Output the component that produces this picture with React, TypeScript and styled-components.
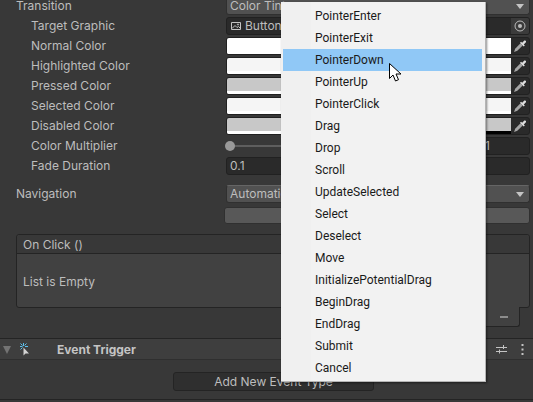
import React from "react";
import styled, { createGlobalStyle } from "styled-components";

const GlobalStyle = createGlobalStyle`
  html, body {
    margin: 0;
    padding: 0;
    height: 402px;
    overflow: hidden;
    background: #383838;
  }
  * { box-sizing: border-box; }
`;

const Page = styled.div`
  position: relative;
  width: 533px;
  height: 402px;
  overflow: hidden;
  background: #383838;
  color: #bdbdbd;
  font: 12px/20px Inter, "Noto Sans", sans-serif;
`;

const Inspector = styled.div`
  margin-top: -4px;
  padding: 0 3px 0 16px;
`;

const Row = styled.div<{ $indent?: boolean }>`
  display: grid;
  grid-template-columns: ${(p) => (p.$indent ? "195px" : "210px")} 1fr;
  height: 20px;
  align-items: center;
  padding-left: ${(p) => (p.$indent ? "15px" : "0")};
`;

const Label = styled.span`
  white-space: nowrap;
`;

const Dropdown = styled.div`
  display: flex;
  align-items: center;
  justify-content: space-between;
  height: 18px;
  padding: 0 5px 0 3px;
  background: #515151;
  border: 1px solid #303030;
  border-top-color: #656565;
  border-radius: 3px;
  white-space: nowrap;
  overflow: hidden;
`;

const Arrow = styled.span`
  width: 0;
  height: 0;
  border-left: 4px solid transparent;
  border-right: 4px solid transparent;
  border-top: 5px solid #c4c4c4;
`;

const Field = styled.div`
  display: flex;
  align-items: center;
  height: 18px;
  padding: 0 3px;
  background: #2a2a2a;
  border: 1px solid #212121;
  border-radius: 3px;
  white-space: nowrap;
  overflow: hidden;
`;

const ObjectField = styled(Field)`
  justify-content: space-between;
  padding-right: 0;
`;

const ObjectName = styled.span`
  display: flex;
  align-items: center;
  gap: 3px;
`;

const TargetButton = styled.span`
  display: flex;
  align-items: center;
  justify-content: center;
  width: 18px;
  height: 16px;
  background: #3b3b3b;
`;

const ColorField = styled.div`
  display: flex;
  height: 18px;
  border: 1px solid #212121;
  border-radius: 3px;
  background: #2a2a2a;
  overflow: hidden;
`;

const Swatch = styled.div<{ $color: string }>`
  flex: 1;
  display: flex;
  flex-direction: column;
  justify-content: flex-end;
  background: ${(p) => p.$color};
`;

// white/black strip under a swatch shows the colour's alpha
const AlphaBar = styled.div<{ $alpha: number }>`
  height: 3px;
  background: linear-gradient(
    to right,
    #fff ${(p) => p.$alpha}%,
    #000 ${(p) => p.$alpha}%
  );
`;

const Picker = styled.span`
  display: flex;
  align-items: center;
  justify-content: center;
  width: 18px;
`;

const SliderRow = styled.div`
  display: flex;
  align-items: center;
  gap: 5px;
`;

const Track = styled.div`
  position: relative;
  flex: 1;
  height: 2px;
  background: #5e5e5e;
`;

const Knob = styled.span`
  position: absolute;
  left: -1px;
  top: -4px;
  width: 10px;
  height: 10px;
  border-radius: 50%;
  background: #999;
`;

const NumberField = styled(Field)`
  width: 49px;
`;

const Spacer = styled.div<{ $h: number }>`
  height: ${(p) => p.$h}px;
`;

const VisualizeRow = styled.div`
  display: flex;
  justify-content: flex-end;
  margin-top: 3px;
`;

const VisualizeButton = styled.div`
  width: 306px;
  height: 17px;
  background: #585858;
  border: 1px solid #303030;
  border-radius: 3px;
`;

const EventBox = styled.div`
  margin-top: 10px;
  border: 1px solid #242424;
  border-radius: 3px;
  background: #414141;
`;

const EventHeader = styled.div`
  height: 19px;
  padding-left: 6px;
  line-height: 19px;
  background: #383838;
  border-bottom: 1px solid #242424;
  border-radius: 3px 3px 0 0;
`;

const EventBody = styled.div`
  display: flex;
  align-items: center;
  height: 53px;
  padding: 2px 0 0 6px;
`;

const FooterRow = styled.div`
  display: flex;
  justify-content: flex-end;
  padding-right: 10px;
`;

const RemoveTab = styled.div`
  display: flex;
  align-items: center;
  justify-content: flex-end;
  width: 70px;
  height: 20px;
  margin-top: -1px;
  padding-right: 11px;
  background: #414141;
  border: 1px solid #242424;
  border-top: 0;
  border-radius: 0 0 3px 3px;
`;

const Minus = styled.span`
  width: 8px;
  height: 2px;
  background: #8c8c8c;
`;

const ComponentBar = styled.div`
  display: flex;
  align-items: center;
  height: 22px;
  margin-top: 11px;
  padding: 1px 9px 0 3px;
  background: #3e3e3e;
  border-top: 1px solid #242424;
  border-bottom: 1px solid #2f2f2f;
`;

const FoldArrow = styled.span`
  width: 0;
  height: 0;
  margin-right: 8px;
  border-left: 4.5px solid transparent;
  border-right: 4.5px solid transparent;
  border-top: 8px solid #737373;
`;

const ComponentTitle = styled.span`
  margin-left: 27px;
  flex: 1;
  font-weight: 700;
  color: #c4c4c4;
`;

const BarIcons = styled.span`
  display: flex;
  align-items: center;
  gap: 10px;
`;

const AddRow = styled.div`
  display: flex;
  padding: 12px 0 0 173px;
`;

const AddButton = styled.div`
  display: flex;
  align-items: center;
  justify-content: center;
  width: 201px;
  height: 19px;
  background: #2f2f2f;
  border: 1px solid #242424;
  border-radius: 3px;
`;

const BottomLine = styled.div`
  margin-top: 8px;
  height: 1px;
  background: #242424;
`;

const Menu = styled.ul`
  position: absolute;
  left: 281px;
  top: 2px;
  width: 205px;
  height: 380px;
  margin: 0;
  padding: 3px 3px 0 2px;
  list-style: none;
  background: linear-gradient(to right, #f0f0f0 30px, #f2f2f2 30px);
  border-right: 1px solid #b5b5b5;
  border-bottom: 1px solid #b5b5b5;
  box-shadow: 1px 1px 2px rgba(0, 0, 0, 0.45);
  font: 12px/22px Roboto, "Open Sans", sans-serif;
  color: #1a1a1a;
`;

const MenuItem = styled.li<{ $active?: boolean }>`
  height: 22px;
  padding-left: 32px;
  background: ${(p) => (p.$active ? "#90c8f6" : "transparent")};
`;

const Cursor = styled.svg`
  position: absolute;
  left: 389px;
  top: 63px;
`;

const ImageIcon = () => (
  <svg width="12" height="10" viewBox="0 0 12 10" fill="none" stroke="#c4c4c4">
    <path d="M1.5 1.5h9v7h-9z" />
    <path d="M2 7.5l3-3 2 2 1.500-1 2 2" />
    <circle cx="8" cy="3.500" r=".6" />
  </svg>
);

const TargetIcon = () => (
  <svg width="12" height="12" viewBox="0 0 12 12" fill="none" stroke="#bdbdbd">
    <circle cx="6" cy="6" r="5" />
    <circle cx="6" cy="6" r="2" fill="#bdbdbd" stroke="none" />
  </svg>
);

const PipetteIcon = () => (
  <svg width="14" height="14" viewBox="0 0 13 13">
    <path d="M1 12l1-3 5-5 2 2-5 5z" fill="#a5a5a5" />
    <path d="M6.500 3.500l1-1 1 1 2-2a1.100 1.100 0 0 1 1.500 1.500l-2 2 1 1-1 1z" fill="#dcdcdc" />
  </svg>
);

const TriggerIcon = () => (
  <svg width="11" height="13" viewBox="0 0 11 13" fill="none">
    <path d="M4.500 4.500v8l2-2h3.500z" fill="#d2d2d2" />
    <path
      d="M4.500 0v3M1 3.500h2.500M6 3.500h3M1.500 .5l2 2M7.500 .5l-2 2M1.500 6.500l2-2"
      stroke="#5cc0ec"
    />
  </svg>
);

const HelpIcon = () => (
  <svg width="11" height="11" viewBox="0 0 11 11" fill="none" stroke="#9a9a9a">
    <circle cx="5.500" cy="5.500" r="4.500" />
  </svg>
);

const SlidersIcon = () => (
  <svg width="11" height="11" viewBox="0 0 11 11" stroke="#c4c4c4">
    <path d="M0 3.500h11M0 7.500h11M7.500 1v4M3.500 5.500v4" />
  </svg>
);

const KebabIcon = () => (
  <svg width="7" height="11" viewBox="-4 0 7 11" fill="#c4c4c4">
    <path d="M0.500 0h2v2h-2zM0.500 4.500h2v2h-2zM0.500 9h2v2h-2z" />
  </svg>
);

const colors = [
  { label: "Normal Color", value: "#ffffff", alpha: 100 },
  { label: "Highlighted Color", value: "#f5f5f5", alpha: 100 },
  { label: "Pressed Color", value: "#c8c8c8", alpha: 100 },
  { label: "Selected Color", value: "#f5f5f5", alpha: 100 },
  { label: "Disabled Color", value: "#c8c8c8", alpha: 50 },
];

const events = [
  "PointerEnter",
  "PointerExit",
  "PointerDown",
  "PointerUp",
  "PointerClick",
  "Drag",
  "Drop",
  "Scroll",
  "UpdateSelected",
  "Select",
  "Deselect",
  "Move",
  "InitializePotentialDrag",
  "BeginDrag",
  "EndDrag",
  "Submit",
  "Cancel",
];

export default function App() {
  return (
    <Page>
      <GlobalStyle />
      <Inspector>
        <Row>
          <Label>Transition</Label>
          <Dropdown>
            Color Tint
            <Arrow />
          </Dropdown>
        </Row>
        <Row $indent>
          <Label>Target Graphic</Label>
          <ObjectField>
            <ObjectName>
              <ImageIcon />
              ButtonImage
            </ObjectName>
            <TargetButton>
              <TargetIcon />
            </TargetButton>
          </ObjectField>
        </Row>
        {colors.map((c) => (
          <Row $indent key={c.label}>
            <Label>{c.label}</Label>
            <ColorField>
              <Swatch $color={c.value}>
                <AlphaBar $alpha={c.alpha} />
              </Swatch>
              <Picker>
                <PipetteIcon />
              </Picker>
            </ColorField>
          </Row>
        ))}
        <Row $indent>
          <Label>Color Multiplier</Label>
          <SliderRow>
            <Track>
              <Knob />
            </Track>
            <NumberField>1</NumberField>
          </SliderRow>
        </Row>
        <Row $indent>
          <Label>Fade Duration</Label>
          <Field>0.1</Field>
        </Row>
        <Spacer $h={8} />
        <Row>
          <Label>Navigation</Label>
          <Dropdown>
            Automatic
            <Arrow />
          </Dropdown>
        </Row>
        <VisualizeRow>
          <VisualizeButton />
        </VisualizeRow>
        <EventBox>
          <EventHeader>On Click ()</EventHeader>
          <EventBody>List is Empty</EventBody>
        </EventBox>
        <FooterRow>
          <RemoveTab>
            <Minus />
          </RemoveTab>
        </FooterRow>
      </Inspector>
      <ComponentBar>
        <FoldArrow />
        <TriggerIcon />
        <ComponentTitle>Event Trigger</ComponentTitle>
        <BarIcons>
          <HelpIcon />
          <SlidersIcon />
          <KebabIcon />
        </BarIcons>
      </ComponentBar>
      <AddRow>
        <AddButton>Add New Event Type</AddButton>
      </AddRow>
      <BottomLine />
      <Menu>
        {events.map((name) => (
          <MenuItem key={name} $active={name === "PointerDown"}>
            {name}
          </MenuItem>
        ))}
      </Menu>
      <Cursor width="13" height="20" viewBox="0 0 13 20">
        <path
          d="M.500.500v15l3.500-3.500 2.500 6 3-1.300-2.500-5.700h5z"
          fill="#fff"
          stroke="#000"
        />
      </Cursor>
    </Page>
  );
}
